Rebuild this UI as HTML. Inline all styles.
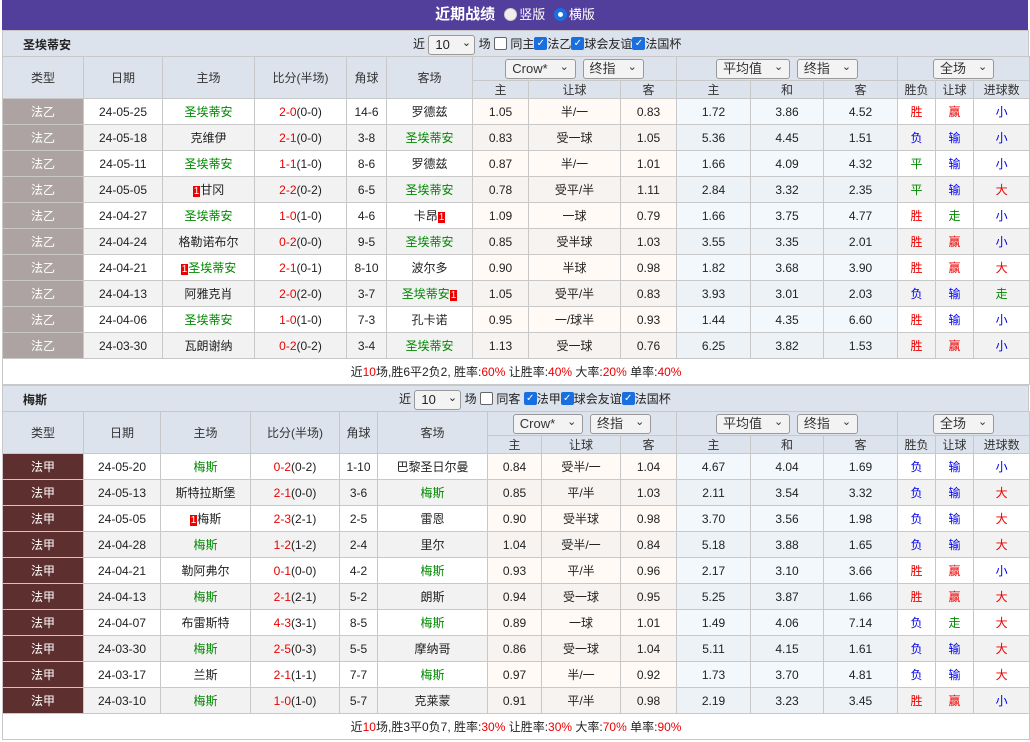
<!DOCTYPE html><html><head><meta charset="utf-8"><style>
*{margin:0;padding:0;box-sizing:border-box}
body{width:1030px;height:742px;background:#fff;font-family:"Liberation Sans","Noto Sans CJK SC",sans-serif;font-size:12px;color:#222;overflow:hidden;position:relative}
.top{position:absolute;left:2px;top:0;width:1026px;height:30px;background:#523f9c;color:#fff;font-weight:bold;font-size:15px;text-align:center;line-height:30px}
.top span{font-size:13px;font-weight:normal}
.rd{display:inline-block;width:13px;height:13px;border-radius:50%;background:#eee;border:1px solid #ccc;vertical-align:-2px;margin:0 2px 0 5px}
.rd.on{background:#fff;border:4px solid #1a6fe0}
.sec{position:absolute;left:2px;width:1027px;height:26px;background:#dce3ec;border:1px solid #c8c8c8;border-bottom:none}
.sec b{position:absolute;left:20px;top:5px;font-size:12px}
.sec .f{position:absolute;top:4px;font-size:12px;line-height:18px;white-space:nowrap}
.sel{display:inline-block;border:1px solid #999;border-radius:3px;background:#f3f3f3;height:20px;line-height:18px;padding:0 6px;font-size:13px;vertical-align:middle}
.sel:after{content:"⌄";margin-left:12px;font-size:11px;position:relative;top:-3px}
.cb{display:inline-block;width:13px;height:13px;border-radius:2px;background:#1a6fe0;color:#fff;font-size:10px;line-height:13px;text-align:center;vertical-align:-2px;overflow:hidden;font-family:"DejaVu Sans",sans-serif}
.cb0{display:inline-block;width:13px;height:13px;border:1px solid #666;border-radius:2px;background:#fff;vertical-align:-2px}
table{position:absolute;left:2px;border-collapse:collapse;table-layout:fixed;width:1027px}
td{border:1px solid #c8c8c8;text-align:center;white-space:nowrap;overflow:hidden;font-size:12px}
.h td{background:#dce3ec;color:#333}
.d td{height:26px}
.d td.t{color:#fff}
.d:nth-child(even) td{background:#f2f2f2}
.d td.o{background:#fffaf6}
.d td.a{background:#f2f8fc}
.d:nth-child(even) td.o{background:#f7f3f0}
.d:nth-child(even) td.a{background:#ecf2f6}
.g{color:#080}.r{color:#e00}.bl{color:#00e}
.rk{background:#e00;color:#fff;font-size:10px;padding:0 1px}
.sum td{height:26px;background:#fff}
.t1 td.t{background:#ada3a3}.t2 td.t{background:#5e2f2f}
</style></head><body>
<div class="top">近期战绩 <span><i class="rd"></i>竖版 <i class="rd on"></i>横版</span></div>

<div class="sec" style="top:30px"><b>圣埃蒂安</b><div class="f" style="left:410px">近 <span class="sel" style="width:47px">10</span> 场 <span class="cb0"></span> 同主<span class="cb">✓</span>法乙<span class="cb">✓</span>球会友谊<span class="cb">✓</span>法国杯</div></div>
<table class="t1" style="top:56px">
<colgroup><col width="81"><col width="79"><col width="92"><col width="92"><col width="40"><col width="86"><col width="56"><col width="92"><col width="56"><col width="74"><col width="73"><col width="74"><col width="38"><col width="38"><col width="56"></colgroup>
<tr class="h" style="height:24px"><td rowspan="2">类型</td><td rowspan="2">日期</td><td rowspan="2">主场</td><td rowspan="2">比分(半场)</td><td rowspan="2">角球</td><td rowspan="2">客场</td><td colspan="3"><span class="sel">Crow*</span> &nbsp;<span class="sel">终指</span></td><td colspan="3"><span class="sel">平均值</span> &nbsp;<span class="sel">终指</span></td><td colspan="3"><span class="sel">全场</span></td></tr>
<tr class="h" style="height:18px"><td>主</td><td>让球</td><td>客</td><td>主</td><td>和</td><td>客</td><td>胜负</td><td>让球</td><td>进球数</td></tr>
<tbody>
<tr class="d"><td class="t">法乙</td><td>24-05-25</td><td class="g">圣埃蒂安</td><td><span class="r">2-0</span>(0-0)</td><td>14-6</td><td>罗德兹</td><td class="o">1.05</td><td class="o">半/一</td><td class="o">0.83</td><td class="a">1.72</td><td class="a">3.86</td><td class="a">4.52</td><td class="r">胜</td><td class="r">赢</td><td class="bl">小</td></tr>
<tr class="d"><td class="t">法乙</td><td>24-05-18</td><td>克维伊</td><td><span class="r">2-1</span>(0-0)</td><td>3-8</td><td class="g">圣埃蒂安</td><td class="o">0.83</td><td class="o">受一球</td><td class="o">1.05</td><td class="a">5.36</td><td class="a">4.45</td><td class="a">1.51</td><td class="bl">负</td><td class="bl">输</td><td class="bl">小</td></tr>
<tr class="d"><td class="t">法乙</td><td>24-05-11</td><td class="g">圣埃蒂安</td><td><span class="r">1-1</span>(1-0)</td><td>8-6</td><td>罗德兹</td><td class="o">0.87</td><td class="o">半/一</td><td class="o">1.01</td><td class="a">1.66</td><td class="a">4.09</td><td class="a">4.32</td><td class="g">平</td><td class="bl">输</td><td class="bl">小</td></tr>
<tr class="d"><td class="t">法乙</td><td>24-05-05</td><td><span class="rk">1</span>甘冈</td><td><span class="r">2-2</span>(0-2)</td><td>6-5</td><td class="g">圣埃蒂安</td><td class="o">0.78</td><td class="o">受平/半</td><td class="o">1.11</td><td class="a">2.84</td><td class="a">3.32</td><td class="a">2.35</td><td class="g">平</td><td class="bl">输</td><td class="r">大</td></tr>
<tr class="d"><td class="t">法乙</td><td>24-04-27</td><td class="g">圣埃蒂安</td><td><span class="r">1-0</span>(1-0)</td><td>4-6</td><td>卡昂<span class="rk">1</span></td><td class="o">1.09</td><td class="o">一球</td><td class="o">0.79</td><td class="a">1.66</td><td class="a">3.75</td><td class="a">4.77</td><td class="r">胜</td><td class="g">走</td><td class="bl">小</td></tr>
<tr class="d"><td class="t">法乙</td><td>24-04-24</td><td>格勒诺布尔</td><td><span class="r">0-2</span>(0-0)</td><td>9-5</td><td class="g">圣埃蒂安</td><td class="o">0.85</td><td class="o">受半球</td><td class="o">1.03</td><td class="a">3.55</td><td class="a">3.35</td><td class="a">2.01</td><td class="r">胜</td><td class="r">赢</td><td class="bl">小</td></tr>
<tr class="d"><td class="t">法乙</td><td>24-04-21</td><td><span class="rk">1</span><span class="g">圣埃蒂安</span></td><td><span class="r">2-1</span>(0-1)</td><td>8-10</td><td>波尔多</td><td class="o">0.90</td><td class="o">半球</td><td class="o">0.98</td><td class="a">1.82</td><td class="a">3.68</td><td class="a">3.90</td><td class="r">胜</td><td class="r">赢</td><td class="r">大</td></tr>
<tr class="d"><td class="t">法乙</td><td>24-04-13</td><td>阿雅克肖</td><td><span class="r">2-0</span>(2-0)</td><td>3-7</td><td><span class="g">圣埃蒂安</span><span class="rk">1</span></td><td class="o">1.05</td><td class="o">受平/半</td><td class="o">0.83</td><td class="a">3.93</td><td class="a">3.01</td><td class="a">2.03</td><td class="bl">负</td><td class="bl">输</td><td class="g">走</td></tr>
<tr class="d"><td class="t">法乙</td><td>24-04-06</td><td class="g">圣埃蒂安</td><td><span class="r">1-0</span>(1-0)</td><td>7-3</td><td>孔卡诺</td><td class="o">0.95</td><td class="o">一/球半</td><td class="o">0.93</td><td class="a">1.44</td><td class="a">4.35</td><td class="a">6.60</td><td class="r">胜</td><td class="bl">输</td><td class="bl">小</td></tr>
<tr class="d"><td class="t">法乙</td><td>24-03-30</td><td>瓦朗谢纳</td><td><span class="r">0-2</span>(0-2)</td><td>3-4</td><td class="g">圣埃蒂安</td><td class="o">1.13</td><td class="o">受一球</td><td class="o">0.76</td><td class="a">6.25</td><td class="a">3.82</td><td class="a">1.53</td><td class="r">胜</td><td class="r">赢</td><td class="bl">小</td></tr>
</tbody>
<tr class="sum"><td colspan="15">近<span class="r">10</span>场,胜6平2负2, 胜率:<span class="r">60%</span> 让胜率:<span class="r">40%</span> 大率:<span class="r">20%</span> 单率:<span class="r">40%</span></td></tr>
</table>

<div class="sec" style="top:385px"><b>梅斯</b><div class="f" style="left:396px">近 <span class="sel" style="width:47px">10</span> 场 <span class="cb0"></span> 同客 <span class="cb">✓</span>法甲<span class="cb">✓</span>球会友谊<span class="cb">✓</span>法国杯</div></div>
<table class="t2" style="top:411px">
<colgroup><col width="81"><col width="77"><col width="90"><col width="89"><col width="38"><col width="110"><col width="54"><col width="79"><col width="56"><col width="74"><col width="73"><col width="74"><col width="38"><col width="38"><col width="56"></colgroup>
<tr class="h" style="height:24px"><td rowspan="2">类型</td><td rowspan="2">日期</td><td rowspan="2">主场</td><td rowspan="2">比分(半场)</td><td rowspan="2">角球</td><td rowspan="2">客场</td><td colspan="3"><span class="sel">Crow*</span> &nbsp;<span class="sel">终指</span></td><td colspan="3"><span class="sel">平均值</span> &nbsp;<span class="sel">终指</span></td><td colspan="3"><span class="sel">全场</span></td></tr>
<tr class="h" style="height:18px"><td>主</td><td>让球</td><td>客</td><td>主</td><td>和</td><td>客</td><td>胜负</td><td>让球</td><td>进球数</td></tr>
<tbody>
<tr class="d"><td class="t">法甲</td><td>24-05-20</td><td class="g">梅斯</td><td><span class="r">0-2</span>(0-2)</td><td>1-10</td><td>巴黎圣日尔曼</td><td class="o">0.84</td><td class="o">受半/一</td><td class="o">1.04</td><td class="a">4.67</td><td class="a">4.04</td><td class="a">1.69</td><td class="bl">负</td><td class="bl">输</td><td class="bl">小</td></tr>
<tr class="d"><td class="t">法甲</td><td>24-05-13</td><td>斯特拉斯堡</td><td><span class="r">2-1</span>(0-0)</td><td>3-6</td><td class="g">梅斯</td><td class="o">0.85</td><td class="o">平/半</td><td class="o">1.03</td><td class="a">2.11</td><td class="a">3.54</td><td class="a">3.32</td><td class="bl">负</td><td class="bl">输</td><td class="r">大</td></tr>
<tr class="d"><td class="t">法甲</td><td>24-05-05</td><td><span class="rk">1</span>梅斯</td><td><span class="r">2-3</span>(2-1)</td><td>2-5</td><td>雷恩</td><td class="o">0.90</td><td class="o">受半球</td><td class="o">0.98</td><td class="a">3.70</td><td class="a">3.56</td><td class="a">1.98</td><td class="bl">负</td><td class="bl">输</td><td class="r">大</td></tr>
<tr class="d"><td class="t">法甲</td><td>24-04-28</td><td class="g">梅斯</td><td><span class="r">1-2</span>(1-2)</td><td>2-4</td><td>里尔</td><td class="o">1.04</td><td class="o">受半/一</td><td class="o">0.84</td><td class="a">5.18</td><td class="a">3.88</td><td class="a">1.65</td><td class="bl">负</td><td class="bl">输</td><td class="r">大</td></tr>
<tr class="d"><td class="t">法甲</td><td>24-04-21</td><td>勒阿弗尔</td><td><span class="r">0-1</span>(0-0)</td><td>4-2</td><td class="g">梅斯</td><td class="o">0.93</td><td class="o">平/半</td><td class="o">0.96</td><td class="a">2.17</td><td class="a">3.10</td><td class="a">3.66</td><td class="r">胜</td><td class="r">赢</td><td class="bl">小</td></tr>
<tr class="d"><td class="t">法甲</td><td>24-04-13</td><td class="g">梅斯</td><td><span class="r">2-1</span>(2-1)</td><td>5-2</td><td>朗斯</td><td class="o">0.94</td><td class="o">受一球</td><td class="o">0.95</td><td class="a">5.25</td><td class="a">3.87</td><td class="a">1.66</td><td class="r">胜</td><td class="r">赢</td><td class="r">大</td></tr>
<tr class="d"><td class="t">法甲</td><td>24-04-07</td><td>布雷斯特</td><td><span class="r">4-3</span>(3-1)</td><td>8-5</td><td class="g">梅斯</td><td class="o">0.89</td><td class="o">一球</td><td class="o">1.01</td><td class="a">1.49</td><td class="a">4.06</td><td class="a">7.14</td><td class="bl">负</td><td class="g">走</td><td class="r">大</td></tr>
<tr class="d"><td class="t">法甲</td><td>24-03-30</td><td class="g">梅斯</td><td><span class="r">2-5</span>(0-3)</td><td>5-5</td><td>摩纳哥</td><td class="o">0.86</td><td class="o">受一球</td><td class="o">1.04</td><td class="a">5.11</td><td class="a">4.15</td><td class="a">1.61</td><td class="bl">负</td><td class="bl">输</td><td class="r">大</td></tr>
<tr class="d"><td class="t">法甲</td><td>24-03-17</td><td>兰斯</td><td><span class="r">2-1</span>(1-1)</td><td>7-7</td><td class="g">梅斯</td><td class="o">0.97</td><td class="o">半/一</td><td class="o">0.92</td><td class="a">1.73</td><td class="a">3.70</td><td class="a">4.81</td><td class="bl">负</td><td class="bl">输</td><td class="r">大</td></tr>
<tr class="d"><td class="t">法甲</td><td>24-03-10</td><td class="g">梅斯</td><td><span class="r">1-0</span>(1-0)</td><td>5-7</td><td>克莱蒙</td><td class="o">0.91</td><td class="o">平/半</td><td class="o">0.98</td><td class="a">2.19</td><td class="a">3.23</td><td class="a">3.45</td><td class="r">胜</td><td class="r">赢</td><td class="bl">小</td></tr>
</tbody>
<tr class="sum"><td colspan="15">近<span class="r">10</span>场,胜3平0负7, 胜率:<span class="r">30%</span> 让胜率:<span class="r">30%</span> 大率:<span class="r">70%</span> 单率:<span class="r">90%</span></td></tr>
</table>
</body></html>
